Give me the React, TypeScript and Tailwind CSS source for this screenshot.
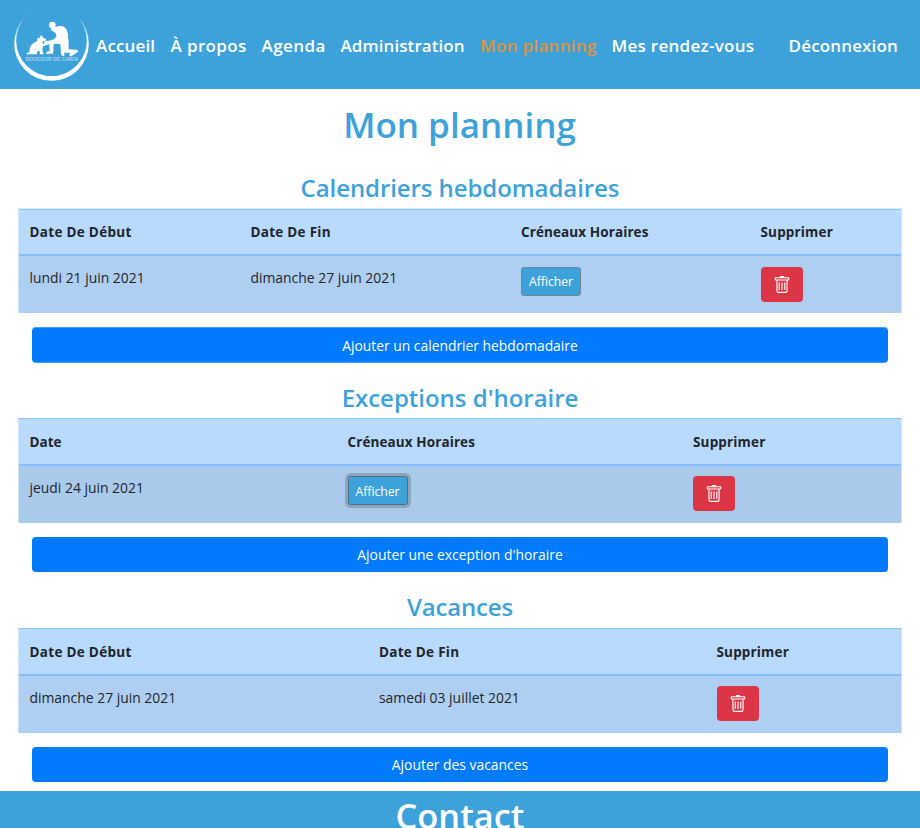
import type { ReactNode } from 'react';
import { BsTrash } from 'react-icons/bs';

function Logo() {
  return (
    <svg viewBox="0 0 92 89" className="h-[89px] w-[92px] shrink-0" fill="#fff">
      <defs>
        <linearGradient id="fade" x1="0" y1="0" x2="0" y2="1">
          <stop offset="0.08" stopColor="#fff" stopOpacity="0" />
          <stop offset="0.3" stopColor="#fff" stopOpacity="0.7" />
          <stop offset="0.55" stopColor="#fff" />
        </linearGradient>
      </defs>
      <path
        fill="url(#fade)"
        fillRule="evenodd"
        d="M14.200 43.500a37.300 37.300 0 1 0 74.600 0a37.300 37.300 0 1 0 -74.600 0ZM16.200 40.800a35.300 35.300 0 1 1 70.600 0a35.300 35.300 0 1 1 -70.600 0Z"
      />
      <g transform="scale(0.33333)">
        {/* kneeling man */}
        <circle cx="157" cy="75" r="10" />
        <path d="M166 82C178 75 194 77 199 88C205 100 206 120 206 148L228 149C234 149 236 152 234 156L216 167C212 170 207 169 208 164L211 158L192 158L194 165Q193 169 187 168Q184 168 183 160L181 132L161 131L160 153L159 161L138 161Q137 156 149 153L148 131L134 131Q131 128 134 124L155 121Q164 118 170 108L166 98L153 90Q151 87 155 85Z" />
        {/* sitting dog */}
        <path d="M120 113L122 106L127 109L129 113L138 117Q140 122 134 123L128 124L128 132L148 127Q152 129 148 132L130 139L127 144L128 157L132 163L120 163L118 151L110 157L112 163L80 163Q77 160 82 158L88 157C88 142 94 132 106 126L112 122Q110 116 114 113Z" />
      </g>
      <text
        x="25.500"
        y="61"
        textLength="52.500"
        lengthAdjust="spacingAndGlyphs"
        fontSize="5"
        fillOpacity="0.5"
        className="font-['Liberation_Sans',sans-serif]"
      >
        DOUCEUR DE CHIEN
      </text>
    </svg>
  );
}

function Nav() {
  return (
    <nav className="flex h-[89px] items-center bg-[#3ea2da] pr-[22px] text-[17px] leading-[24px] font-semibold whitespace-nowrap text-white">
      <Logo />
      <div className="flex grow pt-[3px] pl-1">
        <a className="w-[74.5px] tracking-[0.15px]">Accueil</a>
        <a className="w-[91px] tracking-[0.38px]">À propos</a>
        <a className="w-[79px] tracking-[0.45px]">Agenda</a>
        <a className="w-[139.5px] tracking-[0.07px]">Administration</a>
        <a className="w-[131.5px] tracking-[0.3px] text-[#e0913c]">Mon planning</a>
        <a className="tracking-[0.28px]">Mes rendez-vous</a>
        <a className="ml-auto tracking-[0.15px]">Déconnexion</a>
      </div>
    </nav>
  );
}

function ShowButton({ focused = false }: { focused?: boolean }) {
  return (
    <button
      className={
        focused
          ? '-mt-px flex h-[29px] w-[60px] items-center justify-center rounded-[3px] border border-[#4d6f86] bg-[#3ea2da] pt-px text-[12.2px] text-white ring-3 ring-[#6c757d]/45'
          : 'flex h-[29px] w-[60px] items-center justify-center rounded-[3px] border border-[#6c8799] bg-[#3ea2da] text-[12.2px] text-white'
      }
    >
      Afficher
    </button>
  );
}

function DeleteButton({ raised = false }: { raised?: boolean }) {
  return (
    <button
      className={
        raised
          ? '-mt-px flex h-[35px] w-[42px] items-center justify-center rounded-[4px] bg-[#dc3545] text-white'
          : 'flex h-[35px] w-[42px] items-center justify-center rounded-[4px] bg-[#dc3545] text-white'
      }
    >
      <BsTrash size={18} />
    </button>
  );
}

type Column = { width: string; label: string; tracking: string; cell: ReactNode };

function Table({ columns, soft = false, hovered = false }: { columns: Column[]; soft?: boolean; hovered?: boolean }) {
  return (
    <div
      className={
        soft
          ? 'mx-[18px] h-[105px] border-x border-t border-x-[#cfe3fb] border-t-[#d9ebff]'
          : 'mx-[18px] h-[105px] border-x border-t border-x-[#cfe3fb] border-t-[#8fc5ff]'
      }
    >
      <div
        className={
          soft
            ? 'flex h-[47px] items-center border-t border-b-2 border-t-[#8fc5ff] border-b-[#82bdfc] bg-[#b8daff] text-[13.5px] font-bold'
            : 'flex h-[47px] items-center border-b-2 border-b-[#82bdfc] bg-[#b8daff] pt-[2px] text-[13.5px] font-bold'
        }
      >
        {columns.map((c) => (
          <div key={c.label} className={`${c.width} ${c.tracking} shrink-0 pl-[10.5px]`}>
            {c.label}
          </div>
        ))}
      </div>
      <div className={`flex h-[57px] items-start pt-[11px] text-[13.9px] leading-[21px] ${hovered ? 'bg-[#aacaec]' : 'bg-[#afcff2]'}`}>
        {columns.map((c) => (
          <div key={c.label} className={`${c.width} shrink-0 pl-[10.5px]`}>
            {c.cell}
          </div>
        ))}
      </div>
    </div>
  );
}

export default function App() {
  return (
    <div className="flex h-[828px] w-[920px] flex-col overflow-hidden bg-white font-['Open_Sans','Noto_Sans',sans-serif] text-[#212529]">
      <Nav />
      <h1 className="mt-[15px] h-[42px] pr-px text-center text-[35px] leading-[42px] font-semibold text-[#3ea2da]">Mon planning</h1>

      <section className="mt-[28px]">
        <h2 className="mb-[6px] text-center text-[24px] leading-[28px] font-semibold tracking-[-0.08px] text-[#3ea2da]">
          Calendriers hebdomadaires
        </h2>
        <Table
          soft
          columns={[
            { width: 'w-[221px]', label: 'Date De Début', tracking: 'tracking-[0.3px]', cell: 'lundi 21 juin 2021' },
            { width: 'w-[270.5px]', label: 'Date De Fin', tracking: 'tracking-[0.27px]', cell: 'dimanche 27 juin 2021' },
            { width: 'w-[239.5px]', label: 'Créneaux Horaires', tracking: 'tracking-[0.1px]', cell: <ShowButton /> },
            { width: 'w-[150px]', label: 'Supprimer', tracking: 'tracking-[0.16px]', cell: <DeleteButton /> },
          ]}
        />
        <button className="mx-[32px] mt-[14px] flex h-[36px] w-[856px] items-center justify-center rounded-[4px] border-y border-y-[#409cff] bg-[#007bff] pt-[2px] text-[13.85px] text-white">
          Ajouter un calendrier hebdomadaire
        </button>
      </section>

      <section className="mt-[21px]">
        <h2 className="mb-[6px] text-center text-[24px] leading-[28px] font-semibold tracking-[-0.02px] text-[#3ea2da]">
          Exceptions d'horaire
        </h2>
        <Table
          hovered
          columns={[
            { width: 'w-[318px]', label: 'Date', tracking: 'tracking-normal', cell: 'jeudi 24 juin 2021' },
            { width: 'w-[345.5px]', label: 'Créneaux Horaires', tracking: 'tracking-[0.1px]', cell: <ShowButton focused /> },
            { width: 'w-[218px]', label: 'Supprimer', tracking: 'tracking-[0.16px]', cell: <DeleteButton raised /> },
          ]}
        />
        <button className="mx-[32px] mt-[14px] flex h-[35px] w-[856px] items-center justify-center rounded-[4px] bg-[#007bff] pt-[2px] text-[13.9px] text-white">
          Ajouter une exception d'horaire
        </button>
      </section>

      <section className="mt-[21px]">
        <h2 className="mb-[7px] text-center text-[24px] leading-[28px] font-semibold tracking-[-0.2px] text-[#3ea2da]">Vacances</h2>
        <Table
          columns={[
            { width: 'w-[349.5px]', label: 'Date De Début', tracking: 'tracking-[0.3px]', cell: 'dimanche 27 juin 2021' },
            { width: 'w-[337.5px]', label: 'Date De Fin', tracking: 'tracking-[0.27px]', cell: 'samedi 03 juillet 2021' },
            { width: 'w-[194px]', label: 'Supprimer', tracking: 'tracking-[0.16px]', cell: <DeleteButton raised /> },
          ]}
        />
        <button className="mx-[32px] mt-[14px] flex h-[35px] w-[856px] items-center justify-center rounded-[4px] bg-[#007bff] pt-[2px] text-[13.9px] text-white">
          Ajouter des vacances
        </button>
      </section>

      <footer className="mt-[9px] h-[37px] shrink-0 bg-[#3ea2da] pt-[4px] text-center text-[34.4px] leading-[41px] font-semibold text-white">
        Contact
      </footer>
    </div>
  );
}
